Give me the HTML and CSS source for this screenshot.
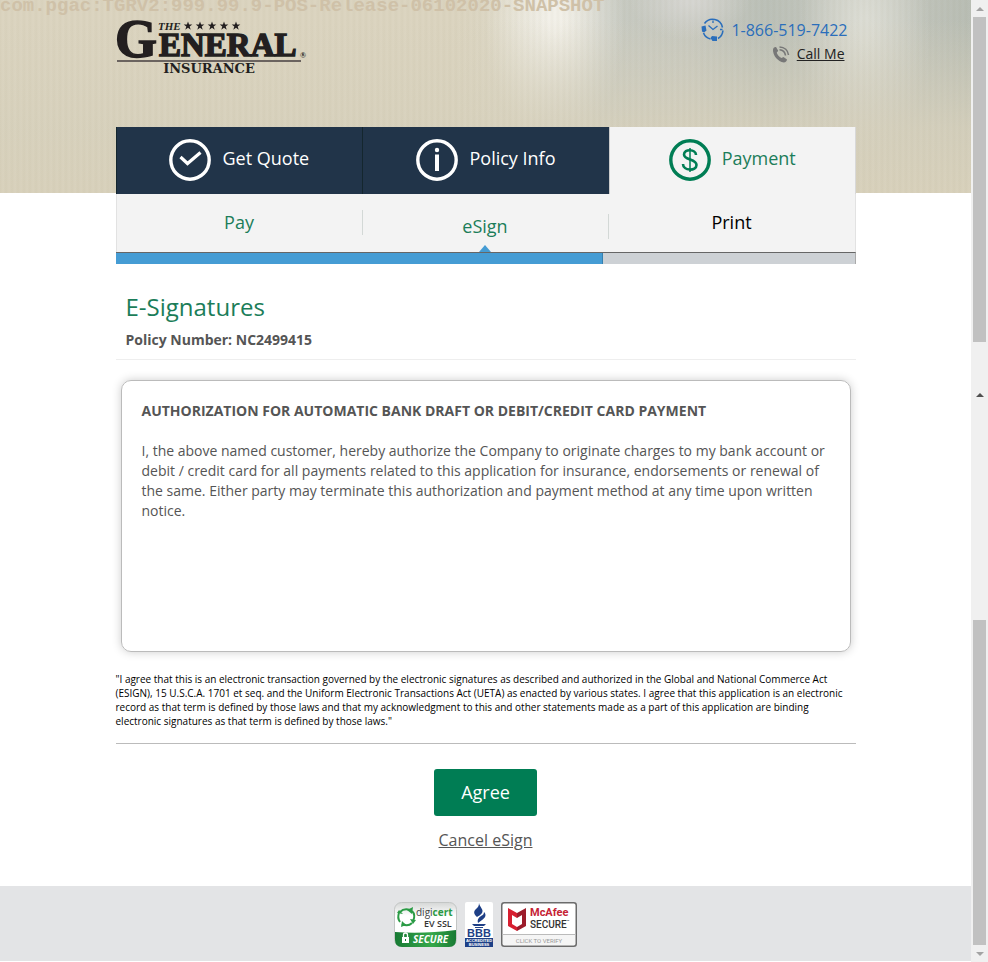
FILE: index.html
```html
<!DOCTYPE html>
<html lang="en">
<head>
<meta charset="utf-8">
<meta name="viewport" content="width=device-width, initial-scale=1">
<title>E-Signatures</title>
<link rel="stylesheet" href="styles.css">
</head>
<body>
<div class="page">
  <p class="version">com.pgac:TGRV2:999.99.9-POS-Release-06102020-SNAPSHOT</p>
  <div class="container">
    <header class="header">
      <a class="logo" href="#">
        <svg width="192" height="58" viewBox="0 0 192 58" role="img" aria-label="The General Insurance">
          <g fill="#231f20" font-family="Liberation Serif, serif" font-weight="bold">
            <text x="-1" y="39" font-size="54" stroke="#231f20" stroke-width="1.500">G</text>
            <text x="42" y="12" font-size="11" font-style="italic">THE</text>
            <text x="43" y="38" font-size="33" stroke="#231f20" stroke-width="1.500">ENERAL</text>
            <text x="184" y="40" font-size="8">®</text>
            <text x="93" y="55" font-size="13" font-family="DejaVu Serif, serif" text-anchor="middle">INSURANCE</text>
          </g>
          <rect x="1" y="42" width="184" height="2" fill="#6b6460"/>
          <defs><path id="star" d="M0-4.500 1.100-1.400H4.300L1.700.6 2.700 3.700 0 1.800-2.700 3.700-1.700.6-4.300-1.400H-1.100Z"/></defs>
          <g fill="#231f20"><use href="#star" x="72" y="8"/><use href="#star" x="84" y="8"/><use href="#star" x="96" y="8"/><use href="#star" x="108" y="8"/><use href="#star" x="120" y="8"/></g>
        </svg>
      </a>
      <div class="contact">
        <a class="phone" href="tel:18665197422">
          <svg width="24" height="24" viewBox="0 0 24 24" aria-hidden="true">
            <g fill="none" stroke="#2a6ebb" stroke-width="1.600">
              <path d="M4.500 5.500A10 10 0 0 1 22.500 9.500M22.900 12.500A10 10 0 0 1 18 20.500M3.500 15a10 10 0 0 0 7 6"/>
              <path d="M8.500 7.500l4.500 4 4.500-3.500M13 2.500v2.500M20 11.500h2.500" stroke-width="1.300"/>
            </g>
            <path fill="#2a6ebb" d="M1.500 8.500l4-1 1 5-2.500 2-2-1zM10.500 20l1.500-2 5 .5v4.500h-4.500z"/>
          </svg>
          <span>1-866-519-7422</span>
        </a>
        <a class="call" href="#">
          <svg width="18" height="18" viewBox="0 0 18 18" aria-hidden="true">
            <path fill="#777" d="M1 4.500C1.500 2.500 3 1.800 4.200 2.200L6.200 5.800 4.700 7.700C5.500 10 7 11.700 9.500 13L11.500 12 15 14.500C15 16 13.500 17.500 11.800 17.500 6 17 .5 10 1 4.500z"/>
            <g fill="none" stroke="#777" stroke-width="1.600"><path d="M7.500 2c5 .2 8.500 3.500 9 8M7.500 4.800c3.500.2 5.500 2 6 5.700"/></g>
          </svg>
          <span>Call Me</span>
        </a>
      </div>
    </header>

    <nav class="steps" aria-label="Steps">
      <a class="step" href="#">
        <svg width="42" height="42" viewBox="1 1 42 42" aria-hidden="true"><g fill="none" stroke="#fff"><circle cx="22" cy="22" r="19.200" stroke-width="3.400"/><path d="M12.500 19l7 6.500 13-11" stroke-width="3.200"/></g></svg>
        <span>Get Quote</span>
      </a>
      <a class="step" href="#">
        <svg width="42" height="42" viewBox="1 1 42 42" aria-hidden="true"><circle cx="22" cy="22" r="19.200" fill="none" stroke="#fff" stroke-width="3.400"/><circle cx="22" cy="12" r="2.200" fill="#fff"/><path d="M22 16.500V33" stroke="#fff" stroke-width="4"/></svg>
        <span>Policy Info</span>
      </a>
      <a class="step step-current" href="#" aria-current="step">
        <svg width="42" height="42" viewBox="1 1 42 42" aria-hidden="true"><g fill="none" stroke="#007d54"><circle cx="22" cy="22" r="19.200" stroke-width="3.400"/><path d="M22 10v24" stroke-width="1.500"/><path d="M28 17c0-6-12-6.500-12-.500 0 6 12.500 4 12.500 10.500 0 6.500-13.500 6-13.500-1" stroke-width="2.600"/></g></svg>
        <span>Payment</span>
      </a>
    </nav>
    <nav class="substeps" aria-label="Payment steps">
      <a class="substep" href="#">Pay</a>
      <a class="substep substep-current" href="#" aria-current="step">eSign</a>
      <a class="substep substep-next" href="#">Print</a>
    </nav>
    <div class="progress"><div class="progress-done"></div></div>

    <main>
      <div class="title">
        <h1>E-Signatures</h1>
        <p>Policy Number: NC2499415</p>
      </div>
      <section class="agreement">
        <h2>AUTHORIZATION FOR AUTOMATIC BANK DRAFT OR DEBIT/CREDIT CARD PAYMENT</h2>
        <p>I, the above named customer, hereby authorize the Company to originate charges to my bank account or debit / credit card for all payments related to this application for insurance, endorsements or renewal of the same. Either party may terminate this authorization and payment method at any time upon written notice.</p>
      </section>
      <p class="disclaimer">"I agree that this is an electronic transaction governed by the electronic signatures as described and authorized in the Global and National Commerce Act (ESIGN), 15 U.S.C.A. 1701 et seq. and the Uniform Electronic Transactions Act (UETA) as enacted by various states. I agree that this application is an electronic record as that term is defined by those laws and that my acknowledgment to this and other statements made as a part of this application are binding electronic signatures as that term is defined by those laws."</p>
      <div class="actions">
        <button class="agree" type="button">Agree</button>
        <a class="cancel" href="#">Cancel eSign</a>
      </div>
    </main>
  </div>

  <footer class="footer">
    <svg width="63" height="46" viewBox="0 0 63 46" role="img" aria-label="DigiCert EV SSL Secure">
      <defs>
        <linearGradient id="silver" x2="0" y2="1"><stop stop-color="#d5d7d6"/><stop offset=".3" stop-color="#fff"/></linearGradient>
        <linearGradient id="green" x2="1" y2="0"><stop stop-color="#187a34"/><stop offset=".6" stop-color="#36a84a"/><stop offset="1" stop-color="#187a34"/></linearGradient>
      </defs>
      <rect x=".5" y=".5" width="62" height="44" rx="7" fill="url(#silver)" stroke="#c3c6c5"/>
      <path d="M1 30q28 2 61-2v10q0 7-7 7H8q-7 0-7-7z" fill="url(#green)"/>
      <g fill="none" stroke="#2a9b45" stroke-width="2"><path d="M6 10q4-4 10-2M18 9q4 4 1 10M18 21q-4 4-10 1M6 20q-3-4-1-9"/></g>
      <path d="M19 5l-1 7-5-4zM22 18l-6-1 3 5zM7 25l1-6 4 4zM3 11l6 1-4-4z" fill="#2a9b45"/>
      <g font-family="Open Sans, sans-serif">
        <text x="22" y="14" font-size="10" fill="#444">digi<tspan font-weight="bold" fill="#2a9b45">cert</tspan></text>
        <text x="30" y="25" font-size="9" font-weight="600" fill="#333">EV SSL</text>
        <text x="19" y="41" font-size="10" font-weight="bold" font-style="italic" fill="#fff">SECURE</text>
      </g>
      <rect x="8" y="35" width="7" height="6" fill="#fff"/><path d="M9.500 35v-2a2 2 0 0 1 4 0v2" fill="none" stroke="#fff" stroke-width="1.300"/><path d="M11.500 37v2" stroke="#187a34"/>
    </svg>
    <svg width="28" height="46" viewBox="0 0 28 46" role="img" aria-label="BBB Accredited Business">
      <rect width="28" height="45" rx="2" fill="#fff"/>
      <path d="M14 1c1 5 5 6 3 10-1 2-4 3-5 4-3-3-4-5-1-8 2-2 3-3 3-6zM19 10c3 3 1 6-2 8l-4 3c-1-3 0-5 3-7 2-1 3-2 3-4zM7 22h14l-2 2H9zM10 25h8v1h-8z" fill="#1e3f86"/>
      <text x="14" y="35" text-anchor="middle" font-family="Liberation Sans, sans-serif" font-weight="bold" font-size="11" fill="#1e3f86">BBB</text>
      <rect y="36" width="28" height="9" fill="#1e3f86"/>
      <g font-family="Liberation Sans, sans-serif" font-weight="bold" font-size="4" fill="#fff" text-anchor="middle"><text x="14" y="40">ACCREDITED</text><text x="14" y="44">BUSINESS</text></g>
    </svg>
    <svg width="76" height="46" viewBox="0 0 76 46" role="img" aria-label="McAfee Secure, click to verify">
      <rect x=".75" y=".75" width="74.500" height="43.500" rx="2.500" fill="#fff" stroke="#6b6b6b" stroke-width="1.500"/>
      <path d="M2 32.500h72V43H2z" fill="#f5f5f5"/><path d="M1 32.500h74" stroke="#bbb"/>
      <path d="M7 6l9 5v5l-5-3v9l5 3v4l-9-5z" fill="#d71f30"/><path d="M25 6l-9 5v5l5-3v9l-5 3v4l9-5z" fill="#9c1c2b"/>
      <g font-family="Roboto, sans-serif" font-weight="bold">
        <text x="29" y="14" font-size="11" fill="#c52234">McAfee</text>
        <text x="29" y="26" font-size="10" font-weight="500" fill="#333">SECURE<tspan font-size="4" dy="-5">™</tspan></text>
        <text x="38" y="41" font-size="6" font-weight="normal" fill="#999" text-anchor="middle">CLICK TO VERIFY</text>
      </g>
    </svg>
  </footer>
</div>
<div class="scroll" aria-hidden="true">
  <div class="scroll-end"><i class="arrow arrow-up"></i></div>
  <div class="thumb"></div>
  <div class="track-upper"><i class="arrow arrow-up arrow-dark"></i></div>
  <div class="thumb"></div>
  <div class="scroll-end"><i class="arrow arrow-down"></i></div>
</div>
</body>
</html>
```
FILE: styles.css
```css
* { box-sizing: border-box; }
body {
  margin: 0;
  min-height: 100vh;
  display: grid;
  grid-template-columns: 1fr 17px;
  font-family: "Open Sans", sans-serif;
  font-size: 14px;
  line-height: 20px;
  color: #555;
  background: #fff;
}
h1, h2, p { margin: 0; }
svg { display: block; flex: none; overflow: visible; }

.page {
  position: relative;
  display: flex;
  flex-direction: column;
  background-repeat: no-repeat;
  background-size: 100% 193px;
  background-image:
    repeating-linear-gradient(90deg, rgba(110, 100, 50, .04) 0, transparent 3px, rgba(110, 100, 50, .04) 6px),
    linear-gradient(180deg, transparent 10%, rgba(216, 210, 190, .85) 66%, #d9d2bd 100%),
    radial-gradient(ellipse 70px 130px at 555px 20px, #f3f1ea 10%, rgba(243, 241, 234, 0) 100%),
    radial-gradient(ellipse 65px 130px at 865px 30px, #dcddd5 10%, rgba(220, 221, 213, 0) 100%),
    radial-gradient(ellipse 60px 40px at 690px 0, #d6d6d2 10%, rgba(214, 214, 210, 0) 100%),
    linear-gradient(90deg, #dcd5c1 0, #dcd5c1 47%, #dedaca 54%, #c8cbc3 62%, #c7c9c1 71%, #bcc1b9 79%, #c8cac2 89%, #b9beb5 100%);
}
.version {
  position: absolute;
  top: 0;
  left: 0;
  font: bold 19px/12px "Liberation Mono", monospace;
  color: #cfc1a8;
  white-space: nowrap;
}
.container { width: 100%; max-width: 740px; margin: 0 auto; }

.header {
  display: flex;
  justify-content: space-between;
  height: 127px;
  padding: 18px 8px 0 0;
}
.contact { display: flex; flex-direction: column; align-items: flex-end; }
.phone, .call { display: flex; align-items: center; gap: 7px; line-height: 24px; }
.phone { font-size: 16px; color: #2a6ebb; text-decoration: none; }
.call { padding-right: 3px; color: #222; }

.steps { display: grid; grid-template-columns: repeat(3, 1fr); }
.step {
  display: flex;
  justify-content: center;
  align-items: center;
  gap: 11px;
  height: 67px;
  padding-bottom: 1px;
  border-left: 1px solid #14262e;
  background: #213449;
  color: #fff;
  font-size: 18px;
  line-height: 24px;
  text-decoration: none;
}
.step span { padding-bottom: 4px; }
.step-current {
  background: #f3f3f3;
  border-left-color: #ccc;
  border-right: 1px solid #d8d8d8;
  color: #1b7d59;
}

.substeps {
  display: grid;
  grid-template-columns: repeat(3, 1fr);
  padding-top: 16px;
  height: 58px;
  background: #f3f3f3;
  border: solid #e2e2e2;
  border-width: 0 1px;
}
.substep {
  height: 25px;
  border-right: 1px solid #d3d8d6;
  color: #1b7d59;
  font-size: 18px;
  line-height: 25px;
  text-align: center;
  text-decoration: none;
}
.substep-current { position: relative; margin-top: 4px; }
.substep-current::after {
  content: "";
  position: absolute;
  top: 31px;
  left: calc(50% - 6px);
  border: 6px solid transparent;
  border-top: 0;
  border-bottom: 7px solid #459cd4;
}
.substep-next { color: #000; border: 0; }
.progress { height: 12px; background: #cdd1d5; border-top: 1px solid #666; border-right: 1px solid #aaa; }
.progress-done { width: 66%; height: 100%; background: #459cd4; border-right: 1px solid #3581b0; }

.title { padding: 27px 10px 9px; border-bottom: 1px solid #eee; }
.title h1 { font-size: 24px; line-height: 32px; font-weight: normal; color: #1b7d59; }
.title p { padding-top: 7px; font-weight: bold; }
.agreement {
  min-height: 272px;
  margin: 20px 5px;
  padding: 20px;
  border: 1px solid #bbb;
  border-radius: 10px;
  box-shadow: 0 0 10px #ccc;
}
.agreement h2 { margin-bottom: 20px; font-size: 14px; line-height: 20px; }
.disclaimer {
  padding-bottom: 15px;
  border-bottom: 1px solid #bbb;
  color: #000;
  font-size: 10px;
  line-height: 14px;
}
.actions {
  display: flex;
  flex-direction: column;
  align-items: center;
  gap: 12px;
  padding: 25px 0 34px;
}
.agree {
  padding: 11px 27px 12px;
  border: 0;
  border-radius: 3px;
  background: #007d54;
  color: #fff;
  font: 18px/24px "Open Sans", sans-serif;
}
.cancel { color: #555; font-size: 16px; line-height: 24px; }

.footer {
  display: flex;
  justify-content: center;
  gap: 8px;
  margin: auto 0 1px;
  padding: 16px 0 13px;
  background: #e3e4e6;
}

.scroll { display: flex; flex-direction: column; background: #f0f0f0; }
.scroll-end { height: 17px; display: grid; place-items: center; }
.thumb { height: 325px; margin: 0 2px; background: #c1c1c1; }
.track-upper { flex: 1; padding-top: 51px; display: flex; justify-content: center; align-items: flex-start; }
.arrow { border: 4px solid transparent; }
.arrow-up { border-top: 0; border-bottom-color: #a3a3a3; }
.arrow-down { border-bottom: 0; border-top-color: #a3a3a3; }
.arrow-dark { border-bottom-color: #505050; }
```
